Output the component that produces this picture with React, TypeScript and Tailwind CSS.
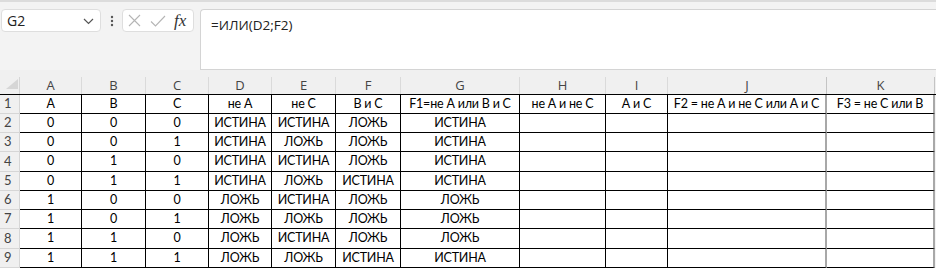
import React from "react";

const cols = [
  { l: "A", w: 62 },
  { l: "B", w: 64 },
  { l: "C", w: 63 },
  { l: "D", w: 63 },
  { l: "E", w: 64 },
  { l: "F", w: 65 },
  { l: "G", w: 119 },
  { l: "H", w: 86 },
  { l: "I", w: 62 },
  { l: "J", w: 159 },
  { l: "K", w: 108 },
];

const T = "ИСТИНА";
const F = "ЛОЖЬ";

const rows: string[][] = [
  ["А", "В", "С", "не А", "не С", "В и С", "F1=не А или В и С", "не А и не С", "А и С", "F2 = не А и не С или А и С", "F3 = не С или В"],
  ["0", "0", "0", T, T, F, T, "", "", "", ""],
  ["0", "0", "1", T, F, F, T, "", "", "", ""],
  ["0", "1", "0", T, T, F, T, "", "", "", ""],
  ["0", "1", "1", T, F, T, T, "", "", "", ""],
  ["1", "0", "0", F, T, F, F, "", "", "", ""],
  ["1", "0", "1", F, F, F, F, "", "", "", ""],
  ["1", "1", "0", F, T, F, F, "", "", "", ""],
  ["1", "1", "1", F, F, T, T, "", "", "", ""],
];

const rowH = [19, 19, 19, 20, 19, 19, 19, 20, 19];

export default function App() {
  return (
    <div className="w-[936px] h-[268px] overflow-hidden bg-[#f3f3f3]" style={{ fontFamily: "'Open Sans', 'Noto Sans', sans-serif" }}>
      {/* formula bar */}
      <div className="h-[70px] border-t-[2px] border-[#dcdcdc] flex items-start pt-[7px]">
        <div className="ml-[1px] w-[100px] h-[23px] bg-white border border-[#dedede] rounded-[4px] flex items-center justify-between pl-[5px] pr-[6px]">
          <span className="text-[14px] text-[#222]">G2</span>
          <svg width="11" height="7" viewBox="0 0 11 7" className="mt-[1px]">
            <path d="M1 1 L5.5 5.5 L10 1" fill="none" stroke="#555" strokeWidth="1.2" />
          </svg>
        </div>
        <div className="w-[21px] h-[23px] flex items-center justify-center">
          <svg width="4" height="12" viewBox="0 0 4 12">
            <circle cx="2" cy="2" r="1.2" fill="#555" />
            <circle cx="2" cy="6" r="1.2" fill="#555" />
            <circle cx="2" cy="10" r="1.2" fill="#555" />
          </svg>
        </div>
        <div className="w-[72px] h-[23px] bg-white border border-[#dedede] rounded-[4px] flex items-center pl-[5px]">
          <svg width="13" height="13" viewBox="0 0 13 13">
            <path d="M1 1 L12 12 M12 1 L1 12" stroke="#b5b5b5" strokeWidth="1.1" />
          </svg>
          <svg width="16" height="12" viewBox="0 0 16 12" className="ml-[9px]">
            <path d="M1 6.5 L5.5 11 L15 1" fill="none" stroke="#b5b5b5" strokeWidth="1.1" />
          </svg>
          <span className="ml-[8px] text-[17px] italic text-[#333] leading-none" style={{ fontFamily: "'Liberation Serif', serif" }}>fx</span>
        </div>
        <div className="ml-[6px] flex-1 h-[61px] bg-white border border-[#d4d4d4] rounded-tl-[4px] border-r-0 pl-[10px] pt-[2px]">
          <span className="text-[13.5px] text-[#222]">=ИЛИ(D2;F2)</span>
        </div>
      </div>
      {/* column header row */}
      <div className="flex h-[24px] pt-[7px] bg-[#f0f0f0]">
        <div className="w-[20px] h-[17px] border-r border-[#d6d6d6] relative">
          <svg width="12" height="10" viewBox="0 0 12 10" className="absolute left-[6px] top-[2px]">
            <polygon points="12,0 12,10 0,10" fill="#d6d6d6" />
          </svg>
        </div>
        {cols.map((c) => (
          <div
            key={c.l}
            style={{ width: c.w }}
            className={`h-[17px] flex items-center justify-center text-[13px] text-[#444] border-r ${c.l === "J" || c.l === "K" ? "border-[#c4c4c4]" : "border-[#dadada]"}`}
          >
            {c.l}
          </div>
        ))}
      </div>
      {/* grid */}
      <div className="flex flex-col" style={{ fontFamily: "Lato, 'Open Sans', sans-serif" }}>
        {rows.map((r, i) => (
          <div key={i} className={`flex ${i === 0 ? "border-t border-black" : ""}`}>
            <div
              style={{ height: rowH[i] }}
              className="w-[20px] bg-[#f0f0f0] border-r border-b border-[#d6d6d6] flex items-center pl-[4px] text-[13px] text-[#444]"
            >
              {i + 1}
            </div>
            {cols.map((c, j) => (
              <div
                key={c.l}
                style={{ width: c.w, height: rowH[i] }}
                className={`bg-white border-b border-black flex items-center justify-center text-[12.5px] tracking-[-0.2px] text-black whitespace-nowrap overflow-hidden ${
                  c.l === "J" || c.l === "K" ? "border-r-2 border-r-[#a8a8a8]" : "border-r"
                }`}
              >
                {r[j]}
              </div>
            ))}
          </div>
        ))}
      </div>
    </div>
  );
}
